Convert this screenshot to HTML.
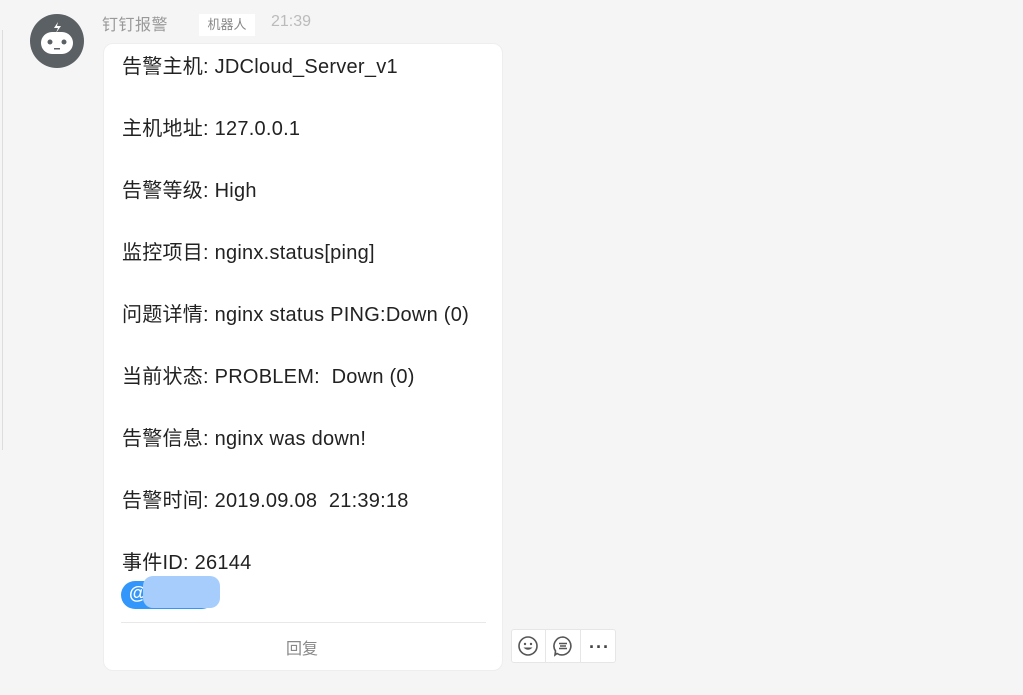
<html><head><style>
body{margin:0;width:1023px;height:695px;background:#f5f5f5;font-family:"Liberation Sans","Noto Sans CJK SC",sans-serif;position:relative;overflow:hidden}
.ab{position:absolute}
.l{position:absolute;left:122px;font-size:20px;color:#222;line-height:24px;white-space:pre;letter-spacing:0.25px}
</style></head><body>
<div class="ab" style="left:2px;top:30px;width:1px;height:420px;background:#ddd"></div>
<svg class="ab" style="left:30px;top:14px" width="54" height="54" viewBox="0 0 54 54">
<circle cx="27" cy="27" r="27" fill="#5b6064"/>
<path d="M28 8 L24 14 L28 14 L26 19 L31 12 L27 12 Z" fill="#fff"/>
<rect x="11" y="18" width="32" height="22" rx="11" fill="#fff"/>
<circle cx="20" cy="28" r="2.5" fill="#5b6064"/><circle cx="34" cy="28" r="2.5" fill="#5b6064"/>
<rect x="24" y="34" width="6" height="1.5" fill="#5b6064"/>
</svg>
<div class="ab" style="left:102px;top:11px;font-size:16px;color:#999;letter-spacing:0.5px">钉钉报警</div>
<div class="ab" style="left:199px;top:14px;width:56px;height:22px;background:#fff;font-size:13px;color:#888;text-align:center;line-height:22px">机器人</div>
<div class="ab" style="left:271px;top:13px;font-size:16px;color:#bbb">21:39</div>
<div class="ab" style="left:103px;top:43px;width:400px;height:628px;background:#fff;border-radius:10px;border:1px solid #eee;box-sizing:border-box"></div>
<div class="l" style="top:55px">告警主机: JDCloud_Server_v1</div>
<div class="l" style="top:117px">主机地址: 127.0.0.1</div>
<div class="l" style="top:179px">告警等级: High</div>
<div class="l" style="top:241px">监控项目: nginx.status[ping]</div>
<div class="l" style="top:303px">问题详情: nginx status PING:Down (0)</div>
<div class="l" style="top:365px">当前状态: PROBLEM:  Down (0)</div>
<div class="l" style="top:427px">告警信息: nginx was down!</div>
<div class="l" style="top:489px">告警时间: 2019.09.08  21:39:18</div>
<div class="l" style="top:551px">事件ID: 26144</div>
<div class="ab" style="left:121px;top:581px;width:95px;height:28px;background:#3296fa;border-radius:14px"></div>
<div class="ab" style="left:129px;top:583px;color:#fff;font-size:18px;font-weight:bold">@</div>
<div class="ab" style="left:143px;top:576px;width:77px;height:32px;background:#a6cdfc;border-radius:10px"></div>
<div class="ab" style="left:121px;top:622px;width:365px;height:1px;background:#e8e8e8"></div>
<div class="ab" style="left:286px;top:635px;font-size:16px;color:#888">回复</div>
<div class="ab" style="left:511px;top:629px;width:105px;height:34px;background:#fff;border:1px solid #e6e6e6;box-sizing:border-box;border-radius:3px"></div>
<div class="ab" style="left:545px;top:629px;width:1px;height:34px;background:#e6e6e6"></div>
<div class="ab" style="left:580px;top:629px;width:1px;height:34px;background:#e6e6e6"></div>
<svg class="ab" style="left:517px;top:635px" width="22" height="22" viewBox="0 0 22 22"><circle cx="11" cy="11" r="9" fill="none" stroke="#555" stroke-width="1.6"/><circle cx="8" cy="9" r="1.2" fill="#555"/><circle cx="14" cy="9" r="1.2" fill="#555"/><path d="M6.5 12.5 Q11 17 15.5 12.5 Z" fill="#555"/></svg>
<svg class="ab" style="left:552px;top:635px" width="22" height="22" viewBox="0 0 22 22"><path d="M11 2 A9 9 0 1 1 5 18.5 L3 20 L3.5 16 A9 9 0 0 1 11 2Z" fill="none" stroke="#555" stroke-width="1.6"/><path d="M7 8.5h8M8 11h6M7 13.5h8" stroke="#555" stroke-width="1.4"/></svg>
<div class="ab" style="left:589px;top:637px;font-size:18px;color:#444;letter-spacing:1px;font-weight:bold">···</div>
</body></html>
